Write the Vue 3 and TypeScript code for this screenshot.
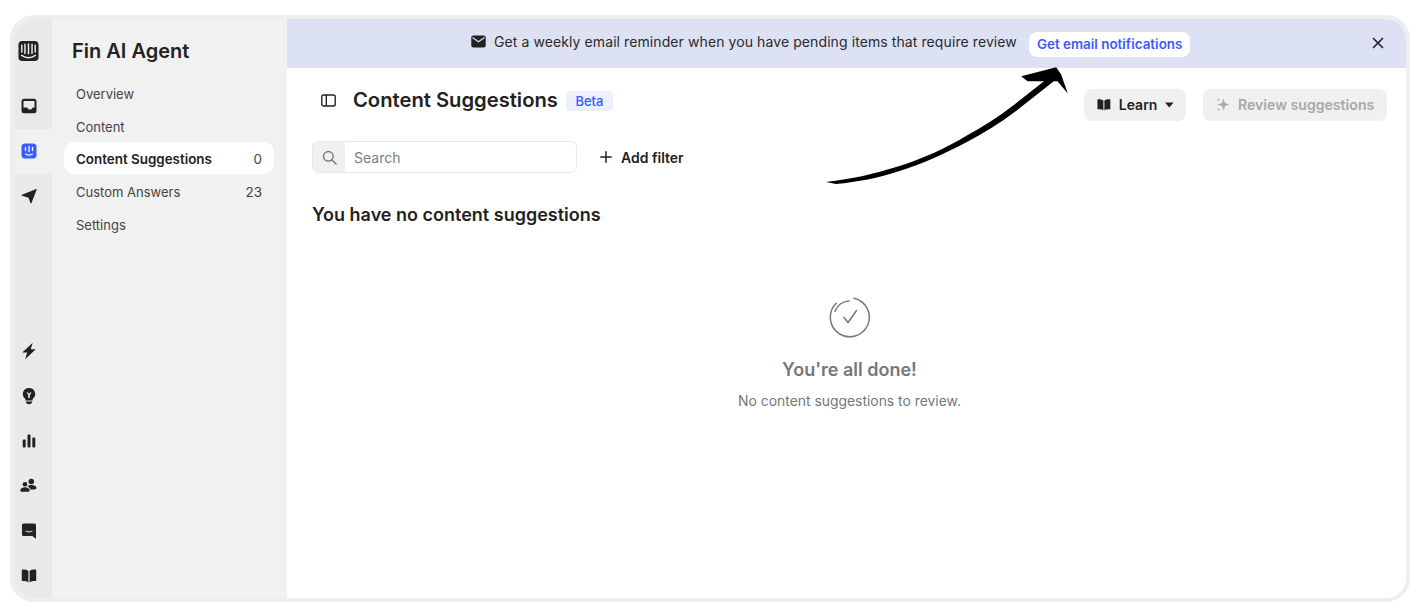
<script setup lang="ts">
interface NavItem { label: string; count?: number; active?: boolean }
const nav: NavItem[] = [
  { label: 'Overview' },
  { label: 'Content' },
  { label: 'Content Suggestions', count: 0, active: true },
  { label: 'Custom Answers', count: 23 },
  { label: 'Settings' },
]
</script>

<template>
  <div class="page">
    <div class="frame">
      <aside class="rail">
        <div class="logo">
          <svg width="21" height="22" viewBox="0 0 22 22">
            <rect x="0.5" y="0.5" width="21" height="21" rx="4" fill="#222" />
            <path d="M4 5v7M7.3 4v9.5M11 3.6v10.4M14.7 4v9.5M18 5v7" stroke="#f0f0f0" stroke-width="1.5" stroke-linecap="round" fill="none" />
            <path d="M3.800 15.600c4.400 3 10 3 14.400 0" stroke="#f0f0f0" stroke-width="1.5" stroke-linecap="round" fill="none" />
          </svg>
        </div>
        <div class="rail-item">
          <svg width="16" height="16" viewBox="0 0 16 16">
            <path fill-rule="evenodd" d="M3 .8h10a2.500 2.500 0 0 1 2.500 2.500v9.400a2.500 2.500 0 0 1-2.500 2.500H3a2.500 2.500 0 0 1-2.500-2.500V3.300A2.500 2.500 0 0 1 3 .8zm-.5 2.700v6h3.200c.5 0 .8.300 1 .7.400.8 1.200 1.300 2.300 1.300s1.900-.5 2.300-1.300c.2-.4.500-.7 1-.7h1.200v-6c0-.3-.2-.5-.5-.5H3c-.3 0-.5.200-.5.500z" fill="#222" />
          </svg>
        </div>
        <div class="rail-item active">
          <svg width="16" height="16" viewBox="0 0 16 16">
            <rect x="0.500" y="0.500" width="15" height="15" rx="3.500" fill="#3b5bfd" />
            <path d="M4.500 4.500v3M8 3.500v5M11.500 4.500v3" stroke="#fff" stroke-width="1.300" stroke-linecap="round" fill="none" />
            <path d="M4.500 11c2 1.200 5 1.200 7 0" stroke="#fff" stroke-width="1.200" stroke-linecap="round" fill="none" />
          </svg>
        </div>
        <div class="rail-item">
          <svg width="16" height="16" viewBox="0 0 16 16">
            <path d="M15.300 1c.3-.1.500.1.400.4L10.500 15c-.2.500-.8.500-1 0L7.500 9.800 1 7.800c-.5-.2-.5-.8 0-1L15.300 1z" fill="#222" />
          </svg>
        </div>
        <div class="rail-spacer"></div>
        <div class="rail-item">
          <svg width="18" height="18" viewBox="0 0 16 16">
            <path d="M11.300 .6L2 9.400h4.400L4.600 15.400 14 6.500H9.500L11.300 .6z" fill="#222" />
          </svg>
        </div>
        <div class="rail-item">
          <svg width="18" height="18" viewBox="0 0 16 16">
            <path fill-rule="evenodd" d="M8 .8a5.400 5.400 0 0 1 3.200 9.800v1.400H4.800v-1.400A5.400 5.400 0 0 1 8 .8zM5.800 5.200l1.500 2v2.500h1.400V7.200l1.500-2-1-.6L8 6l-1.200-1.400-1 .6z" fill="#222" />
            <path d="M5.200 12.800h5.600c0 1.300-1.200 2.500-2.800 2.500s-2.800-1.200-2.800-2.500z" fill="#222" />
          </svg>
        </div>
        <div class="rail-item">
          <svg width="16" height="16" viewBox="0 0 16 16">
            <rect x="1.700" y="6.500" width="3" height="8" rx="1" fill="#222" />
            <rect x="6.500" y="1.500" width="3" height="13" rx="1" fill="#222" />
            <rect x="11.300" y="4.500" width="3" height="10" rx="1" fill="#222" />
          </svg>
        </div>
        <div class="rail-item">
          <svg width="17" height="16" viewBox="0 0 17 16">
            <circle cx="11.300" cy="3.500" r="2.800" fill="#222" />
            <circle cx="5" cy="6.300" r="2.300" fill="#222" />
            <path d="M7.500 8.200c1-.9 2.300-1.200 3.800-1.200 2.600 0 5.200 1.200 5.200 3 0 .9-1 1.400-2.500 1.400h-3.500c-.5-1.300-1.500-2.400-3-3.200z" fill="#222" />
            <path d="M5 9.300c2.600 0 4.700 1.300 4.700 3.100 0 .9-.9 1.300-2.200 1.300h-5C1.200 13.700.3 13.300.3 12.400c0-1.800 2.100-3.100 4.700-3.100z" fill="#222" />
          </svg>
        </div>
        <div class="rail-item">
          <svg width="16" height="16" viewBox="0 0 16 16">
            <path fill-rule="evenodd" d="M2.500 .5h11A1.500 1.500 0 0 1 15 2v13c0 .4-.4.600-.7.400L11.500 13h-9A1.500 1.500 0 0 1 1 11.500V2A1.500 1.500 0 0 1 2.500 .5zm1.800 7.800c2.200 1.500 5.200 1.500 7.400 0l-.6-.9c-1.800 1.200-4.400 1.200-6.200 0l-.6.900z" fill="#222" />
          </svg>
        </div>
        <div class="rail-item">
          <svg width="16" height="16" viewBox="0 0 16 16">
            <path d="M.8 2.300c0-.4.300-.7.700-.7 2.700 0 4.700.4 5.900 1.500v11.300c-1.200-.9-3.200-1.300-5.900-1.300-.4 0-.7-.3-.7-.7V2.300z" fill="#222" />
            <path d="M15.200 2.300c0-.4-.3-.7-.7-.7-2.700 0-4.700.4-5.900 1.500v11.300c1.200-.9 3.200-1.300 5.900-1.300.4 0 .7-.3.700-.7V2.300z" fill="#222" />
          </svg>
        </div>
      </aside>

      <nav class="sidebar">
        <h2 class="side-title">Fin AI Agent</h2>
        <ul class="nav">
          <li v-for="item in nav" :key="item.label" class="nav-item" :class="{ active: item.active }">
            <span>{{ item.label }}</span>
            <span v-if="item.count !== undefined" class="count">{{ item.count }}</span>
          </li>
        </ul>
      </nav>

      <main class="main">
        <div class="banner">
          <div class="banner-center">
            <svg class="mail" width="15" height="13" viewBox="0 0 15 13">
              <rect x="0.300" y="0.500" width="14.400" height="12" rx="2" fill="#222" />
              <path d="M1.500 2.600l6 4.200 6-4.200" stroke="#dde1f4" stroke-width="1.200" fill="none" />
            </svg>
            <span class="banner-text">Get a weekly email reminder when you have pending items that require review</span>
            <button class="banner-btn">Get email notifications</button>
          </div>
          <svg class="close" width="12" height="12" viewBox="0 0 12 12">
            <path d="M1.500 1.500l9 9M10.500 1.500l-9 9" stroke="#222" stroke-width="1.700" stroke-linecap="round" />
          </svg>
        </div>

        <div class="content">
          <header class="header">
            <div class="header-left">
              <svg width="15" height="13" viewBox="0 0 15 13" class="panel">
                <rect x="0.800" y="1" width="13.400" height="11" rx="1.800" fill="none" stroke="#222" stroke-width="1.400" />
                <path d="M5.300 1v11" stroke="#222" stroke-width="1.400" />
              </svg>
              <h1 class="title">Content Suggestions</h1>
              <span class="beta">Beta</span>
            </div>
            <div class="header-right">
              <button class="btn learn">
                <svg class="learn-book" width="16" height="14" viewBox="0 0 16 15">
                  <path d="M.5 1.500c0-.4.300-.7.700-.7 2.800 0 5 .4 6.200 1.500v11.500c-1.200-.9-3.400-1.300-6.200-1.300-.4 0-.7-.3-.7-.7V1.500z" fill="#222" />
                  <path d="M15.500 1.500c0-.4-.3-.7-.7-.7-2.800 0-5 .4-6.200 1.500v11.500c1.200-.9 3.400-1.300 6.200-1.300.4 0 .7-.3.700-.7V1.500z" fill="#222" />
                </svg>
                <span>Learn</span>
                <svg width="10" height="6" viewBox="0 0 10 6"><path d="M0 0h10L5 6z" fill="#222" /></svg>
              </button>
              <button class="btn review">
                <svg width="15" height="15" viewBox="0 0 15 15">
                  <path d="M8.500 1.500l1.500 4.500 4.500 1.500-4.500 1.500-1.500 4.500L7 9 2.500 7.500 7 6z" fill="#aaa" />
                  <path d="M3.500 .5l.5 1.500 1.500.5-1.500.5-.5 1.500L3 3l-1.500-.5L3 2zM3.500 10.500l.5 1.400 1.400.5-1.400.5-.5 1.400-.5-1.400-1.400-.5 1.400-.5z" fill="#bbb" />
                </svg>
                <span>Review suggestions</span>
              </button>
            </div>
          </header>

          <div class="filters">
            <div class="search">
              <div class="search-icon">
                <svg width="15" height="15" viewBox="0 0 15 15">
                  <circle cx="6.300" cy="6.300" r="4.800" fill="none" stroke="#777" stroke-width="1.400" />
                  <path d="M10 10l4 4" stroke="#777" stroke-width="1.500" stroke-linecap="round" />
                </svg>
              </div>
              <span class="placeholder">Search</span>
            </div>
            <div class="add-filter">
              <svg width="12" height="12" viewBox="0 0 12 12">
                <path d="M6 .8v10.400M.8 6h10.400" stroke="#222" stroke-width="1.500" stroke-linecap="round" />
              </svg>
              <span>Add filter</span>
            </div>
          </div>

          <h3 class="subhead">You have no content suggestions</h3>

          <div class="empty">
            <svg width="42" height="42" viewBox="0 0 42 42">
              <path d="M25 2.200A19.500 19.500 0 1 1 7.200 7.300" fill="none" stroke="#777" stroke-width="1.500" stroke-linecap="round" />
              <path d="M6 15.500A16 16 0 0 1 20 5" fill="none" stroke="#777" stroke-width="1.500" stroke-linecap="round" />
              <path d="M15 21.500l4 5L27.500 14.500" fill="none" stroke="#777" stroke-width="1.500" stroke-linecap="round" stroke-linejoin="round" />
            </svg>
            <div class="empty-title">You're all done!</div>
            <div class="empty-sub">No content suggestions to review.</div>
          </div>
        </div>

        <svg class="arrow" width="250" height="125" viewBox="0 0 250 125">
          <path d="M4 116C30 113 52 108 77.500 100C100 93 124 82 144 70C162 60 176 51 190.500 40L230.500 8.500L234 13.500L194 45C178 57 162 67 144 76.500C122 88 100 98 77.500 105C56 112 36 116 14 118Z" fill="#000" />
          <path d="M199.200 10.200L234.200 1.200L239.200 8.500L245.800 27.500L235.500 15.200L205.500 15.200Z" fill="#000" />
        </svg>
      </main>
    </div>
  </div>
</template>

<style>
html, body { margin: 0; background: #fff; }
</style>

<style scoped>
* { box-sizing: border-box; }
.page {
  width: 1426px;
  height: 616px;
  padding: 15px 16px 14px 10px;
  font-family: Inter, "Liberation Sans", sans-serif;
  color: #222;
  -webkit-font-smoothing: antialiased;
}
.frame {
  display: flex;
  height: 100%;
  border: 4.5px solid #eeeeee;
  border-radius: 24px;
  overflow: hidden;
  background: #fff;
}
.rail {
  width: 38px;
  flex: none;
  background: #e9e9e9;
  display: flex;
  flex-direction: column;
  align-items: stretch;
}
.logo {
  height: 64.500px;
  display: flex;
  align-items: center;
  justify-content: center;
  padding-right: 9px;
}
.rail-item {
  height: 45px;
  flex: none;
  display: flex;
  align-items: center;
  justify-content: center;
  padding-right: 9px;
}
.rail-item.active { background: #f1f1f1; }
.rail-spacer { flex: 1; }
.sidebar {
  width: 235px;
  flex: none;
  background: #f1f1f1;
  padding: 0 13px 0 12px;
}
.side-title {
  margin: 0;
  height: 59px;
  padding: 20px 0 0 8px;
  font-size: 20px;
  line-height: 24px;
  font-weight: 600;
  color: #222;
}
.nav { list-style: none; margin: 0; padding: 0; }
.nav-item {
  height: 32.600px;
  padding: 0 12px;
  display: flex;
  align-items: center;
  justify-content: space-between;
  font-size: 13px;
  color: #444;
  border-radius: 10px;
}
.nav-item.active {
  background: #fff;
  color: #222;
  font-weight: 600;
  font-size: 13.400px;
  margin: -1.500px 0 1.500px;
  padding-top: 3px;
}
.count { font-weight: 400; color: #444; font-size: 13.500px; }
.main {
  flex: 1;
  min-width: 0;
  position: relative;
  display: flex;
  flex-direction: column;
}
.banner {
  height: 48.500px;
  flex: none;
  background: #dde1f4;
  display: flex;
  align-items: center;
  padding: 0 22px 0 184px;
}
.banner-center { display: flex; align-items: center; flex: 1; }
.mail { margin-right: 8px; margin-bottom: 4px; }
.banner-text { font-size: 14px; color: #2b2b2b; letter-spacing: 0.09px; margin-bottom: 4px; }
.banner-btn {
  margin: 2px 0 0 12px;
  height: 25px;
  padding: 0 8px;
  border: none;
  border-radius: 8px;
  background: #fff;
  color: #3b5bfd;
  font: 600 13.450px Inter, "Liberation Sans", sans-serif;
}
.content {
  flex: 1;
  padding: 0 19px 0 25px;
}
.header {
  display: flex;
  justify-content: space-between;
  height: 73.500px;
}
.header-left {
  display: flex;
  align-items: center;
  height: 65px;
}
.panel { margin: 0 17px 0 9px; }
.title {
  margin: 0 8px 0 0;
  font-size: 20.200px;
  line-height: 26px;
  font-weight: 600;
  color: #222;
}
.beta {
  height: 20px;
  padding: 0 9.500px;
  display: flex;
  align-items: center;
  border-radius: 4px;
  background: #eceffc;
  color: #3b5bfd;
  font-size: 13px;
  font-weight: 500;
  margin-top: 1px;
}
.header-right {
  display: flex;
  gap: 17px;
  padding-top: 21px;
}
.btn {
  height: 32px;
  border: none;
  border-radius: 8px;
  background: #f0f0f0;
  display: flex;
  align-items: center;
  font: 600 14px Inter, "Liberation Sans", sans-serif;
  padding: 0 12px;
}
.learn { color: #222; gap: 8px; width: 102px; }
.learn-book { margin-left: 1px; }
.review { color: #a8a8a8; gap: 8px; width: 184px; letter-spacing: 0.05px; }
.filters {
  display: flex;
  align-items: center;
  height: 32px;
  gap: 23px;
}
.search {
  width: 265px;
  height: 32px;
  border: 1px solid #e8e8e8;
  border-radius: 6px;
  display: flex;
  align-items: center;
  overflow: hidden;
}
.search-icon {
  width: 32px;
  height: 100%;
  background: #f0f0f0;
  display: flex;
  align-items: center;
  justify-content: center;
}
.placeholder { margin-left: 9px; font-size: 14px; color: #7b7b7b; }
.add-filter {
  display: flex;
  align-items: center;
  gap: 9px;
  font-size: 14px;
  font-weight: 600;
  color: #222;
}
.subhead {
  margin: 30px 0 0;
  font-size: 18px;
  line-height: 24px;
  font-weight: 600;
  color: #222;
}
.empty {
  display: flex;
  flex-direction: column;
  align-items: center;
  margin-top: 69px;
}
.empty-title {
  margin-top: 20px;
  font-size: 18px;
  line-height: 24px;
  font-weight: 600;
  color: #777;
}
.empty-sub {
  margin-top: 10px;
  font-size: 13.900px;
  line-height: 18px;
  color: #777;
}
.close { flex: none; }
.arrow {
  position: absolute;
  left: 535px;
  top: 47px;
}
</style>
